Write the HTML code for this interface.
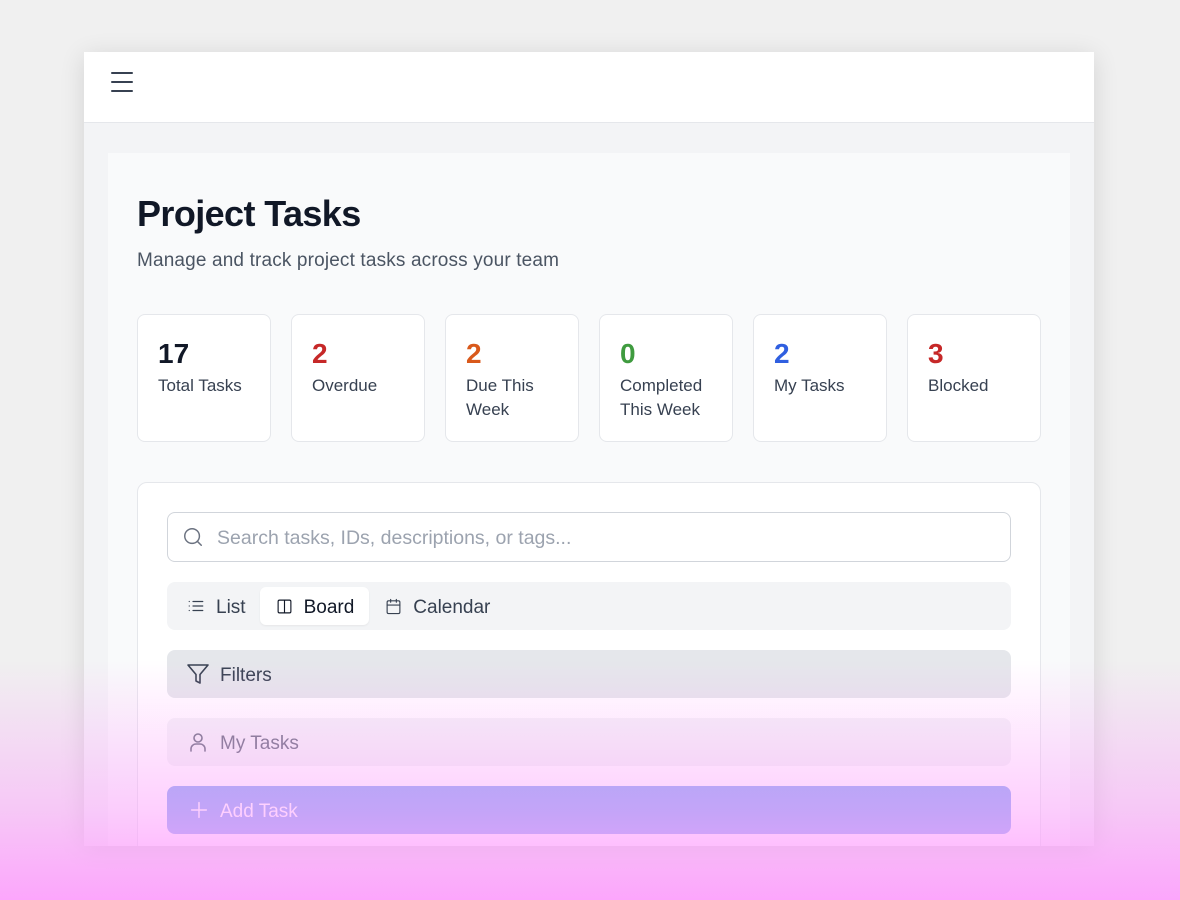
<!DOCTYPE html>
<html><head><style>
*{box-sizing:border-box;margin:0;padding:0}
body{width:1180px;height:900px;background:#f0f0f0;font-family:"Liberation Sans",sans-serif;position:relative;overflow:hidden}
.win{position:absolute;left:84px;top:52px;width:1010px;height:794px;background:#f3f4f6;box-shadow:0 4px 24px rgba(0,0,0,.12);overflow:hidden}
.hdr{height:71px;background:#fff;border-bottom:1px solid #e5e7eb;position:relative}
.panel{position:absolute;left:24px;top:101px;width:962px;height:720px;background:#f9fafb}
.abs{position:absolute}
h1{position:absolute;left:53px;top:141px;font-size:36px;font-weight:700;color:#111827;letter-spacing:-.6px}
.sub{position:absolute;left:53px;top:198px;font-size:19px;color:#4b5563;letter-spacing:.15px}
.card{position:absolute;top:262px;width:134px;height:128px;background:#fff;border:1px solid #e5e7eb;border-radius:8px;padding:24px 20px}
.card b{display:block;font-size:28px;line-height:30px;font-weight:700}
.card span{display:block;font-size:17px;line-height:24px;color:#374151;margin-top:5px}
.main{position:absolute;left:53px;top:430px;width:904px;height:420px;background:#fff;border:1px solid #e5e7eb;border-radius:10px}
.row{position:absolute;left:29px;width:844px;border-radius:8px;display:flex;align-items:center;font-size:19px}
.row span{padding-top:3px}
svg{fill:none;stroke-width:1.6;stroke-linecap:round;stroke-linejoin:round;flex:none}
.tab{display:flex;align-items:center;height:38px}
.ov{position:absolute;left:0;top:0;width:1180px;height:900px;background:linear-gradient(to bottom,rgba(253,158,253,0) 0px,rgba(253,158,253,0) 660px,rgba(253,158,253,.49) 810px,rgba(253,158,253,.9) 900px);pointer-events:none}
</style></head><body>
<div class="win">
 <div class="hdr">
  <div class="abs" style="left:27px;top:20px;width:22px;height:2px;background:#374151;border-radius:1px"></div>
  <div class="abs" style="left:27px;top:29px;width:22px;height:2px;background:#374151;border-radius:1px"></div>
  <div class="abs" style="left:27px;top:38px;width:22px;height:2px;background:#374151;border-radius:1px"></div>
 </div>
 <div class="panel"></div>
 <h1>Project Tasks</h1>
 <div class="sub">Manage and track project tasks across your team</div>
 <div class="card" style="left:53px"><b style="color:#111827">17</b><span>Total Tasks</span></div>
 <div class="card" style="left:207px"><b style="color:#c62828">2</b><span>Overdue</span></div>
 <div class="card" style="left:361px"><b style="color:#d9591b">2</b><span>Due This Week</span></div>
 <div class="card" style="left:515px"><b style="color:#3f9b3f">0</b><span>Completed This Week</span></div>
 <div class="card" style="left:669px"><b style="color:#2f5fe0">2</b><span>My Tasks</span></div>
 <div class="card" style="left:823px"><b style="color:#c62828">3</b><span>Blocked</span></div>
 <div class="main">
  <div class="row" style="top:29px;height:50px;border:1px solid #d1d5db;padding-left:14px;color:#9ca3af;font-size:19.5px">
   <svg width="22" height="22" viewBox="0 0 24 24" stroke="#6b7280"><circle cx="11" cy="11" r="8"/><path d="M21 21l-4.3-4.3"/></svg>
   <span style="margin-left:13px">Search tasks, IDs, descriptions, or tags...</span></div>
  <div class="row" style="top:99px;height:48px;background:#f3f4f6;padding:0 5px;color:#374151">
   <div class="tab" style="padding:0 14px 0 15px">
    <svg width="18" height="18" viewBox="0 0 24 24" stroke="#374151"><path d="M8 6h13M8 12h13M8 18h13M3 6h.01M3 12h.01M3 18h.01"/></svg><span style="margin-left:11px">List</span></div>
   <div class="tab" style="padding:0 15px 0 16px;background:#fff;border-radius:6px;box-shadow:0 1px 2px rgba(0,0,0,.06);color:#111827">
    <svg width="17" height="17" viewBox="0 0 24 24" stroke="#111827"><rect x="3" y="3" width="18" height="18" rx="2"/><path d="M12 3v18"/></svg><span style="margin-left:11px">Board</span></div>
   <div class="tab" style="padding:0 14px 0 16px">
    <svg width="17" height="17" viewBox="0 0 24 24" stroke="#374151"><rect x="3" y="4" width="18" height="18" rx="2"/><path d="M16 2v4M8 2v4M3 10h18"/></svg><span style="margin-left:11px">Calendar</span></div>
  </div>
  <div class="row" style="top:167px;height:48px;background:#e5e7eb;padding-left:19px;color:#374151">
   <svg width="24" height="24" viewBox="0 0 24 24" stroke="#374151"><path d="M22 3H2l8 9.46V19l4 2v-8.54L22 3z"/></svg><span style="margin-left:10px">Filters</span></div>
  <div class="row" style="top:235px;height:48px;background:#f3f4f6;padding-left:19px;color:#6b7280">
   <svg width="24" height="24" viewBox="0 0 24 24" stroke="#6b7280"><circle cx="12" cy="8" r="4"/><path d="M5 21v-2a5 5 0 0 1 5-5h4a5 5 0 0 1 5 5v2"/></svg><span style="margin-left:10px">My Tasks</span></div>
  <div class="row" style="top:303px;height:48px;background:rgba(70,120,235,.62);padding-left:21px;color:#fff">
   <svg width="22" height="22" viewBox="0 0 24 24" stroke="#fff"><path d="M12 4v16M4 12h16"/></svg><span style="margin-left:10px">Add Task</span></div>
 </div>
</div>
<div class="ov"></div>
</body></html>
